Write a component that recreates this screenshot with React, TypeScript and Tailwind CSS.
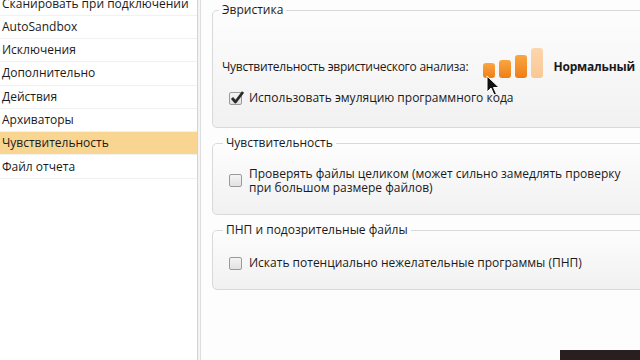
import React from "react";

const items = [
  "Сканировать при подключении",
  "AutoSandbox",
  "Исключения",
  "Дополнительно",
  "Действия",
  "Архиваторы",
  "Чувствительность",
  "Файл отчета",
];

function Check({ checked }: { checked?: boolean }) {
  return (
    <div className="relative w-[13px] h-[13px] shrink-0 rounded-[2px] border border-[#9a9a9a] bg-gradient-to-b from-[#f4f4f4] to-[#e2e2e2]">
      {checked && (
        <svg className="absolute left-[0px] top-[-3px]" width="15" height="15" viewBox="0 0 15 15">
          <path d="M2 8 L5.5 12 L13 2" fill="none" stroke="#2b2b2b" strokeWidth="2.8" strokeLinejoin="round" />
        </svg>
      )}
    </div>
  );
}

function Group({
  title,
  children,
  className,
  legendClass,
}: {
  title: string;
  children: React.ReactNode;
  className?: string;
  legendClass?: string;
}) {
  return (
    <fieldset className={`w-[450px] shrink-0 rounded-[5px] border border-[#d9d9d9] bg-gradient-to-b from-[#fdfdfd] to-[#f1f1f2] pl-[16px] ${className ?? ""}`}>
      <legend className={`px-[3px] text-[12px] text-[#1a1a1a] leading-[14px] ${legendClass ?? ""}`}>{title}</legend>
      {children}
    </fieldset>
  );
}

export default function App() {
  return (
    <div
      className="relative w-[640px] h-[360px] overflow-hidden bg-white flex text-[#1a1a1a]"
      style={{ fontFamily: '"Open Sans", "Noto Sans", sans-serif' }}
    >
      <div className="w-[197px] shrink-0 flex flex-col mt-[-7.6px] text-[12px]">
        {items.map((t, i) => (
          <div
            key={t}
            className={`h-[23.3px] shrink-0 flex items-center pl-[2px] border-b border-[#f1f1f1] whitespace-nowrap ${i === 6 ? "bg-[#f9d592]" : ""}`}
          >
            {t}
          </div>
        ))}
      </div>
      <div className="w-[1px] shrink-0 bg-[#d2d2d2]" />
      <div className="w-[2px] shrink-0 bg-[#f4f4f4]" />
      <div className="w-[1px] shrink-0 bg-[#dedede]" />
      <div className="flex-1 min-w-0 pl-[11px] pt-[3px] flex flex-col gap-[8px] bg-[#fdfdfd]">
        <Group title="Эвристика" className="h-[125px]" legendClass="ml-[-10px]">
          <div className="flex items-end mt-[28px] h-[31px] ml-[-7px] whitespace-nowrap">
            <span className="text-[12px] tracking-[-0.25px]">Чувствительность эвристического анализа:</span>
            <div className="flex items-end gap-[4px] ml-[15px] mb-[-2px] shrink-0">
              <div className="w-[12px] h-[15px] rounded-[3px] bg-gradient-to-b from-[#f9a640] to-[#ef7d10]" />
              <div className="w-[12px] h-[18px] rounded-[3px] bg-gradient-to-b from-[#f9a640] to-[#ef7d10]" />
              <div className="w-[12px] h-[23px] rounded-[3px] bg-gradient-to-b from-[#f9a640] to-[#ef7d10]" />
              <div className="w-[12px] h-[30px] rounded-[3px] bg-gradient-to-b from-[#fcd6ad] to-[#f9c896]" />
            </div>
            <span className="ml-[10px] text-[12px] font-bold tracking-[-0.2px]">Нормальный</span>
          </div>
          <div className="flex items-center gap-[7px] mt-[13px]">
            <Check checked />
            <span className="text-[12px]">Использовать эмуляцию программного кода</span>
          </div>
        </Group>
        <Group title="Чувствительность" className="h-[79px]" legendClass="ml-[-6px]">
          <div className="flex items-start gap-[7px] mt-[17px]">
            <div className="mt-[7px]"><Check /></div>
            <div className="flex flex-col text-[12px] leading-[14px]">
              <span>Проверять файлы целиком (может сильно замедлять проверку</span>
              <span>при большом размере файлов)</span>
            </div>
          </div>
        </Group>
        <Group title="ПНП и подозрительные файлы" className="h-[67px]" legendClass="ml-[-6px]">
          <div className="flex items-center gap-[7px] mt-[17px]">
            <Check />
            <span className="text-[12px]">Искать потенциально нежелательные программы (ПНП)</span>
          </div>
        </Group>
      </div>
      <svg className="absolute left-[486px] top-[75px]" width="16" height="22" viewBox="0 0 16 22">
        <path d="M1 1 L1 17 L5 13 L8 20 L10.5 19 L7.5 12.5 L13 12.5 Z" fill="#111" stroke="#fff" strokeWidth="1" />
      </svg>
      <div className="absolute left-[560px] top-[350px] w-[80px] h-[10px] bg-[#2a1f20]" />
    </div>
  );
}
